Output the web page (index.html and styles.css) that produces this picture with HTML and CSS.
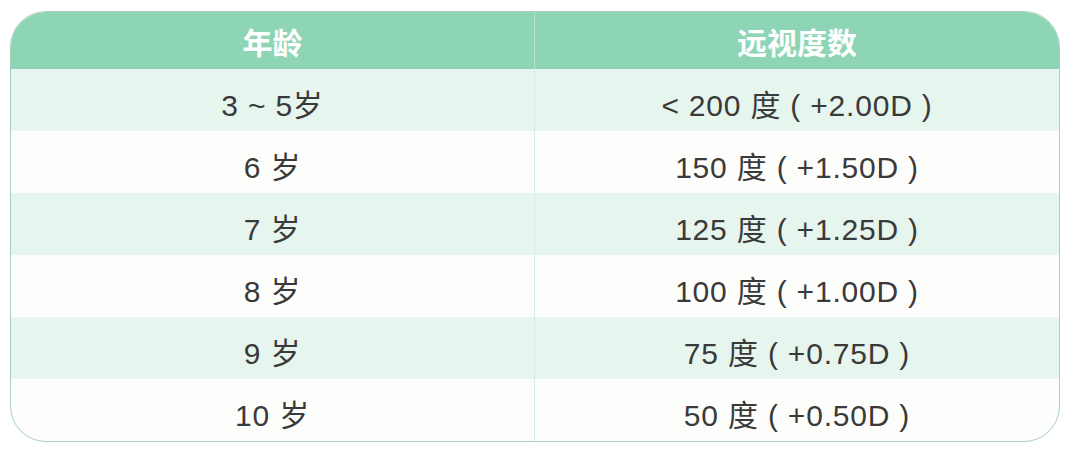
FILE: index.html
```html
<!DOCTYPE html>
<html lang="zh">
<head>
<meta charset="utf-8">
<link rel="stylesheet" href="styles.css">
</head>
<body>
<div class="table">
  <div class="row head">
    <div class="cell">年龄</div>
    <div class="cell">远视度数</div>
  </div>
  <div class="row tint">
    <div class="cell">3 ~ 5岁</div>
    <div class="cell">&lt; 200 度 ( +2.00D )</div>
  </div>
  <div class="row">
    <div class="cell">6 岁</div>
    <div class="cell">150 度 ( +1.50D )</div>
  </div>
  <div class="row tint">
    <div class="cell">7 岁</div>
    <div class="cell">125 度 ( +1.25D )</div>
  </div>
  <div class="row">
    <div class="cell">8 岁</div>
    <div class="cell">100 度 ( +1.00D )</div>
  </div>
  <div class="row tint">
    <div class="cell">9 岁</div>
    <div class="cell">75 度 ( +0.75D )</div>
  </div>
  <div class="row">
    <div class="cell">10 岁</div>
    <div class="cell">50 度 ( +0.50D )</div>
  </div>
</div>
</body>
</html>
```

FILE: styles.css
```css
html, body {
  margin: 0;
  padding: 0;
  background: #ffffff;
}
body {
  padding: 11px 0 0 10px;
  font-family: "Liberation Sans", "Noto Sans CJK SC", sans-serif;
  color: #3a3a3a;
}
.table {
  width: 1050px;
  box-sizing: border-box;
  border: 1px solid #a9cfc0;
  border-radius: 36px;
  overflow: hidden;
  background: #fdfefc;
}
.row {
  display: grid;
  grid-template-columns: 523px 1fr;
  height: 62px;
}
.row.head {
  height: 57px;
  background: #8dd5b4;
  color: #ffffff;
  font-family: "Noto Sans CJK SC", sans-serif;
  font-weight: 700;
}
.row.tint {
  background: #e6f5ee;
}
.cell {
  display: flex;
  align-items: center;
  justify-content: center;
  font-size: 30px;
  letter-spacing: 0.8px;
  padding-top: 6px;
  box-sizing: border-box;
}
.row.head .cell {
  font-size: 30px;
  letter-spacing: 0;
  padding-top: 0;
}
.cell + .cell {
  border-left: 1px solid #d6ede3;
}
.row.head .cell + .cell {
  border-left: 1px solid #b9e4cf;
}
```
